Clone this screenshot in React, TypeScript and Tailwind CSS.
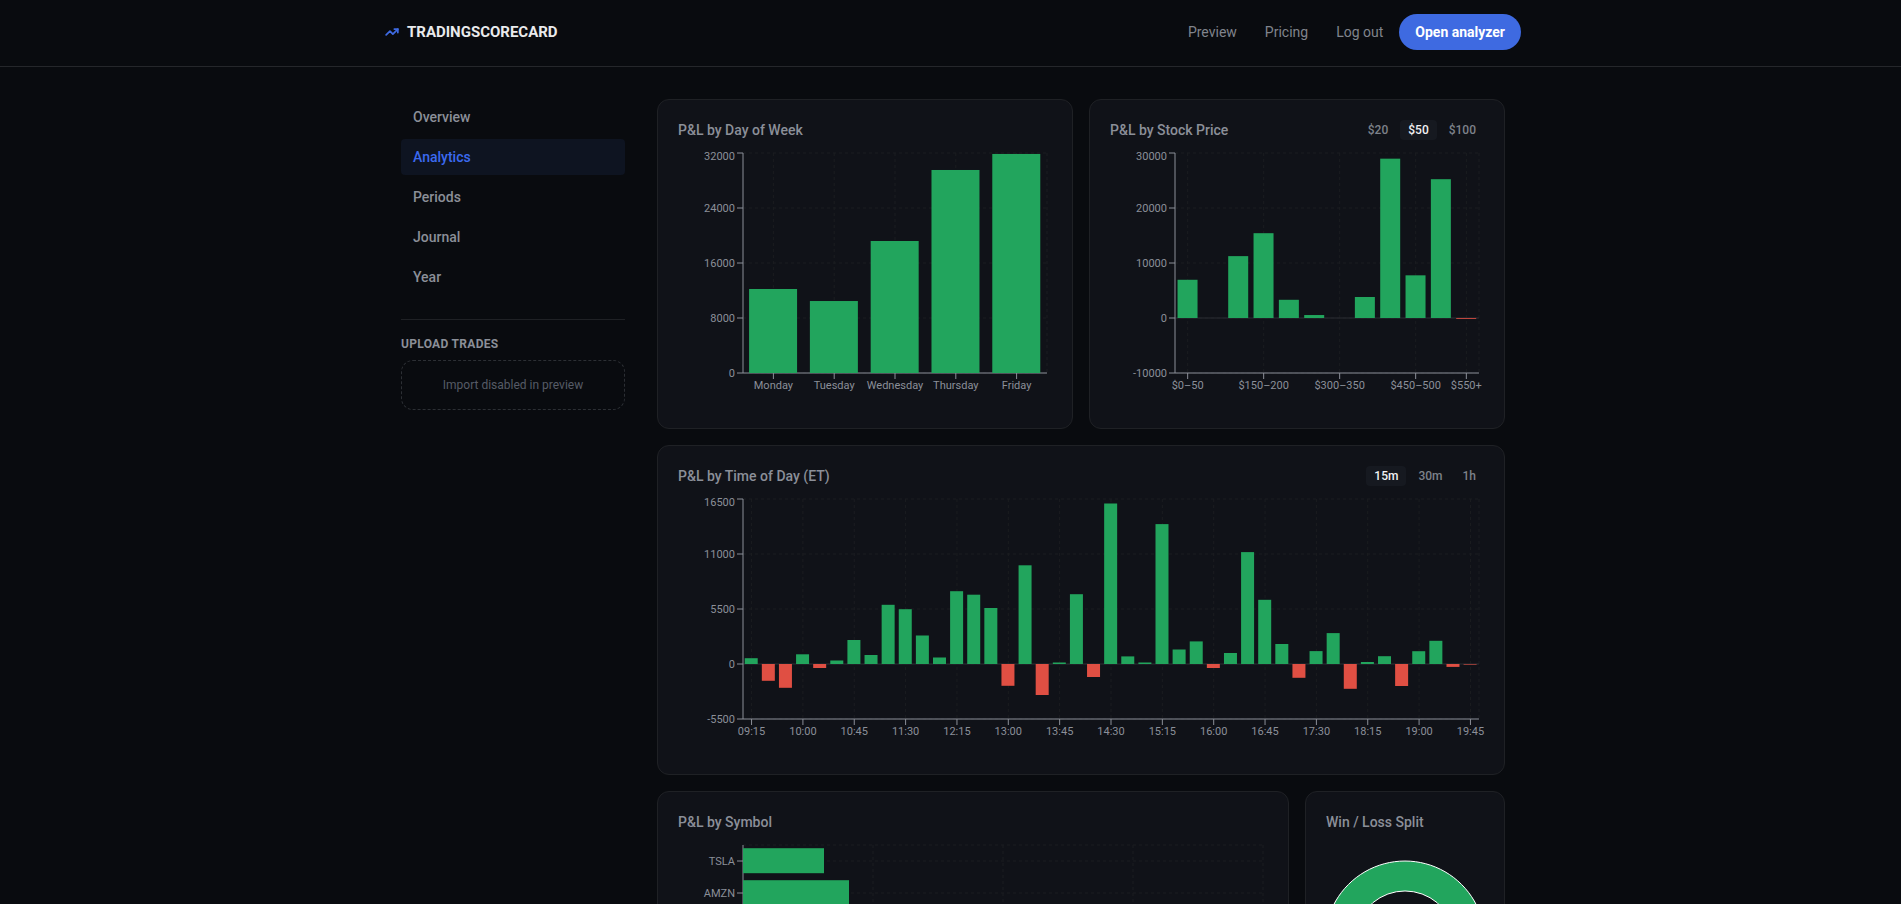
import React, { useLayoutEffect, useRef, useState } from "react";
import { TrendingUp } from "lucide-react";

interface Datum {
  label: string;
  value: number;
}

const GREEN = "#22a55d";
const RED = "#e04f43";
const AXIS = "#8b8f98";
const GRID = "#1b1d20";

const PLOT_TOP = 5;
const PLOT_LEFT = 65;
const PLOT_HEIGHT = 220;
const CHART_HEIGHT = 260;

const NAV = ["Overview", "Analytics", "Periods", "Journal", "Year"];

const DAYS: Datum[] = [
  { label: "Monday", value: 12220 },
  { label: "Tuesday", value: 10470 },
  { label: "Wednesday", value: 19200 },
  { label: "Thursday", value: 29530 },
  { label: "Friday", value: 31860 },
];

const PRICES: Record<string, Datum[]> = {
  $20: [
    { label: "$0–20", value: 2400 },
    { label: "$20–40", value: 3900 },
    { label: "$100–120", value: 11300 },
    { label: "$160–180", value: 15400 },
    { label: "$220+", value: 28900 },
  ],
  $50: [
    { label: "$0–50", value: 6950 },
    { label: "$50–100", value: 0 },
    { label: "$100–150", value: 11250 },
    { label: "$150–200", value: 15420 },
    { label: "$200–250", value: 3310 },
    { label: "$250–300", value: 540 },
    { label: "$300–350", value: 0 },
    { label: "$350–400", value: 3820 },
    { label: "$400–450", value: 28970 },
    { label: "$450–500", value: 7760 },
    { label: "$500–550", value: 25240 },
    { label: "$550+", value: -150 },
  ],
  $100: [
    { label: "$0–100", value: 6950 },
    { label: "$100–200", value: 26670 },
    { label: "$200–300", value: 3850 },
    { label: "$300–400", value: 3820 },
    { label: "$500+", value: 25090 },
  ],
};

const QUARTERS = [
  580, -1680, -2380, 970, -400, 350, 2400, 900, 5920, 5480, 2850, 650, 7280,
  6930, 5600, -2180, 9870, -3100, 150, 6980, -1300, 16050, 760, 150, 13990,
  1450, 2260, -400, 1100, 11190, 6420, 2000, -1380, 1290, 3090, -2480, 200,
  780, -2200, 1280, 2320, -290, -60,
];

const clock = (minutes: number) =>
  `${String(Math.floor(minutes / 60)).padStart(2, "0")}:${String(minutes % 60).padStart(2, "0")}`;

const bucketTimes = (size: number): Datum[] => {
  const out: Datum[] = [];
  for (let i = 0; i < QUARTERS.length; i += size) {
    const slice = QUARTERS.slice(i, i + size);
    out.push({
      label: clock(555 + i * 15),
      value: slice.reduce((a, b) => a + b, 0) / size,
    });
  }
  return out;
};

const SYMBOLS: Datum[] = [
  { label: "TSLA", value: 81 },
  { label: "AMZN", value: 106 },
  { label: "MSFT", value: 142 },
  { label: "META", value: 188 },
  { label: "AMD", value: 236 },
  { label: "AAPL", value: 301 },
  { label: "SPY", value: 388 },
  { label: "NVDA", value: 470 },
];

function useWidth(initial: number) {
  const ref = useRef<HTMLDivElement>(null);
  const [width, setWidth] = useState(initial);

  useLayoutEffect(() => {
    const el = ref.current;
    if (!el) return;
    const measure = () => setWidth(el.clientWidth);
    measure();
    const observer = new ResizeObserver(measure);
    observer.observe(el);
    return () => observer.disconnect();
  }, []);

  return { ref, width };
}

interface ColumnChartProps {
  data: Datum[];
  ticks: number[];
  every?: number;
}

// Vertical bars with a zero line; `ticks` runs from the lowest to the highest value
const ColumnChart: React.FC<ColumnChartProps> = ({ data, ticks, every = 1 }) => {
  const { ref, width } = useWidth(374);
  const right = width - 5;
  const bottom = PLOT_TOP + PLOT_HEIGHT;
  const band = (right - PLOT_LEFT) / data.length;
  const barWidth = Math.floor(band * 0.8);
  const min = ticks[0];
  const max = ticks[ticks.length - 1];
  const y = (v: number) => PLOT_TOP + ((max - v) / (max - min)) * PLOT_HEIGHT;
  const center = (i: number) => PLOT_LEFT + band * (i + 0.5);
  const labelled = data
    .map((d, i) => ({ ...d, i }))
    .filter(({ i }) => i % every === 0 || (i === data.length - 1 && i % every > 1));

  return (
    <div ref={ref} className="w-full min-w-0">
      <svg width={width} height={CHART_HEIGHT} className="block overflow-visible text-[11px]">
        <g stroke={GRID} strokeDasharray="3 3">
          {ticks.map((t) => (
            <line key={t} x1={PLOT_LEFT} x2={right} y1={y(t)} y2={y(t)} />
          ))}
          {labelled.map((d) => (
            <line key={d.i} x1={center(d.i)} x2={center(d.i)} y1={PLOT_TOP} y2={bottom} />
          ))}
          <line x1={right} x2={right} y1={PLOT_TOP} y2={bottom} />
        </g>
        {min < 0 && <line x1={PLOT_LEFT} x2={right} y1={y(0)} y2={y(0)} stroke="#2b2d32" />}
        <g stroke={AXIS}>
          <line x1={PLOT_LEFT} x2={PLOT_LEFT} y1={PLOT_TOP} y2={bottom} />
          <line x1={PLOT_LEFT} x2={right} y1={bottom} y2={bottom} />
          {ticks.map((t) => (
            <line key={t} x1={PLOT_LEFT - 6} x2={PLOT_LEFT} y1={y(t)} y2={y(t)} />
          ))}
          {labelled.map((d) => (
            <line key={d.i} x1={center(d.i)} x2={center(d.i)} y1={bottom} y2={bottom + 6} />
          ))}
        </g>
        {data.map((d, i) => (
          <rect
            key={d.label}
            x={PLOT_LEFT + band * (i + 0.1)}
            y={Math.min(y(d.value), y(0))}
            width={barWidth}
            height={Math.abs(y(d.value) - y(0))}
            fill={d.value < 0 ? RED : GREEN}
          />
        ))}
        <g fill={AXIS}>
          {ticks.map((t) => (
            <text key={t} x={PLOT_LEFT - 8} y={Math.max(y(t), 8) + 4} textAnchor="end">
              {t}
            </text>
          ))}
          {labelled.map((d) => (
            <text key={d.i} x={center(d.i)} y={bottom + 16} textAnchor="middle">
              {d.label}
            </text>
          ))}
        </g>
      </svg>
    </div>
  );
};

// Horizontal bars, one 32px row per symbol
const SymbolChart: React.FC = () => {
  const { ref, width } = useWidth(590);
  const right = width - 5;
  const row = 32;
  const bottom = PLOT_TOP + row * SYMBOLS.length;
  const scale = (right - PLOT_LEFT) / 520;
  const columns = [1, 2, 3, 4].map((n) => PLOT_LEFT + ((right - PLOT_LEFT) * n) / 4);
  const middle = (i: number) => PLOT_TOP + row * (i + 0.5);

  return (
    <div ref={ref} className="w-full min-w-0">
      <svg width={width} height={bottom + 35} className="block text-[11px]">
        <g stroke={GRID} strokeDasharray="3 3">
          <line x1={PLOT_LEFT} x2={right} y1={PLOT_TOP} y2={PLOT_TOP} />
          {SYMBOLS.map((s, i) => (
            <line key={s.label} x1={PLOT_LEFT} x2={right} y1={middle(i)} y2={middle(i)} />
          ))}
          {columns.map((x) => (
            <line key={x} x1={x} x2={x} y1={PLOT_TOP} y2={bottom} />
          ))}
        </g>
        <g stroke={AXIS}>
          <line x1={PLOT_LEFT} x2={PLOT_LEFT} y1={PLOT_TOP} y2={bottom} />
          <line x1={PLOT_LEFT} x2={right} y1={bottom} y2={bottom} />
        </g>
        {SYMBOLS.map((s, i) => (
          <g key={s.label}>
            <line x1={PLOT_LEFT - 6} x2={PLOT_LEFT} y1={middle(i)} y2={middle(i)} stroke={AXIS} />
            <rect
              x={PLOT_LEFT}
              y={PLOT_TOP + row * (i + 0.1)}
              width={s.value * scale}
              height={25}
              fill={GREEN}
            />
            <text x={PLOT_LEFT - 8} y={middle(i) + 4} textAnchor="end" fill={AXIS}>
              {s.label}
            </text>
          </g>
        ))}
      </svg>
    </div>
  );
};

const SplitDonut: React.FC = () => (
  <svg viewBox="0 0 158 202" className="block w-full overflow-visible" stroke="#fff">
    <path d="M159 101A80 80 0 1 0 39 170.3L54 144.3A50 50 0 1 1 129 101Z" fill={GREEN} />
    <path d="M39 170.3A80 80 0 0 0 159 101L129 101A50 50 0 0 1 54 144.3Z" fill={RED} />
  </svg>
);

interface CardProps {
  title: string;
  actions?: React.ReactNode;
  children: React.ReactNode;
}

const Card: React.FC<CardProps> = ({ title, actions, children }) => (
  <section className="min-w-0 rounded-xl border border-[#1f2125] bg-[#101218] p-5">
    <div className="mb-2 flex h-5 items-center justify-between">
      <h2 className="text-sm font-medium text-[#8b8f98]">{title}</h2>
      {actions}
    </div>
    {children}
  </section>
);

interface ToggleProps {
  options: string[];
  value: string;
  onChange: (value: string) => void;
}

const Toggle: React.FC<ToggleProps> = ({ options, value, onChange }) => (
  <div className="flex gap-1">
    {options.map((option) => (
      <button
        key={option}
        type="button"
        aria-pressed={option === value}
        onClick={() => onChange(option)}
        className={`rounded px-2 py-0.5 text-xs font-medium ${
          option === value ? "bg-[#161920] text-[#f1f2f4]" : "text-[#7d818a]"
        }`}
      >
        {option}
      </button>
    ))}
  </div>
);

const App: React.FC = () => {
  const [page, setPage] = useState("Analytics");
  const [step, setStep] = useState("$50");
  const [bucket, setBucket] = useState("15m");

  const size = bucket === "15m" ? 1 : bucket === "30m" ? 2 : 4;

  return (
    <div className="min-h-screen bg-[#090b0f] font-[Roboto,'Noto_Sans',sans-serif] text-[#8b8f98]">
      <header className="border-b border-[#25272b] pt-3.5 pb-4 pl-[5px]">
        <div className="mx-auto flex max-w-[1136px] items-center justify-between">
          <a href="#" className="flex items-center gap-2 text-[15px] leading-5 font-bold text-[#e9eaec]">
            <TrendingUp className="size-3.5 text-[#3e6ae1]" strokeWidth={3} />
            TRADINGSCORECARD
          </a>
          <nav className="flex items-center gap-1 text-sm text-[#80848c]">
            <a href="#preview" className="px-3">Preview</a>
            <a href="#pricing" className="px-3">Pricing</a>
            <a href="#logout" className="px-3">Log out</a>
            <a href="#analyzer" className="rounded-full bg-[#3e6ae1] px-4 py-2 font-bold text-white">
              Open analyzer
            </a>
          </nav>
        </div>
      </header>

      <div className="py-8 pl-[5px]">
        <div className="mx-auto flex max-w-[1104px] items-start gap-8">
          <aside className="w-56 shrink-0">
            <nav className="flex flex-col gap-1">
              {NAV.map((item) => (
                <button
                  key={item}
                  type="button"
                  onClick={() => setPage(item)}
                  className={`rounded-sm px-3 py-2 text-left text-sm font-medium ${
                    item === page ? "bg-[#0e1421] text-[#3b6af0]" : "text-[#8b8f98]"
                  }`}
                >
                  {item}
                </button>
              ))}
            </nav>
            <div className="mt-6 border-t border-[#1f2125] pt-4">
              <h3 className="mb-2 text-xs font-bold tracking-wide">UPLOAD TRADES</h3>
              <div className="rounded-xl border border-dashed border-[#2c2f34] py-4 text-center text-xs text-[#565b66]">
                Import disabled in preview
              </div>
            </div>
          </aside>

          <main className="grid min-w-0 flex-1 gap-4">
            <div className="grid grid-cols-2 gap-4">
              <Card title="P&L by Day of Week">
                <ColumnChart data={DAYS} ticks={[0, 8000, 16000, 24000, 32000]} />
              </Card>
              <Card
                title="P&L by Stock Price"
                actions={<Toggle options={["$20", "$50", "$100"]} value={step} onChange={setStep} />}
              >
                <ColumnChart
                  data={PRICES[step]}
                  ticks={[-10000, 0, 10000, 20000, 30000]}
                  every={step === "$50" ? 3 : 1}
                />
              </Card>
            </div>
            <Card
              title="P&L by Time of Day (ET)"
              actions={<Toggle options={["15m", "30m", "1h"]} value={bucket} onChange={setBucket} />}
            >
              <ColumnChart
                data={bucketTimes(size)}
                ticks={[-5500, 0, 5500, 11000, 16500]}
                every={size === 1 ? 3 : 1}
              />
            </Card>
            <div className="grid grid-cols-[minmax(0,1fr)_200px] gap-4">
              <Card title="P&L by Symbol">
                <SymbolChart />
              </Card>
              <Card title="Win / Loss Split">
                <SplitDonut />
              </Card>
            </div>
          </main>
        </div>
      </div>
    </div>
  );
};

export default App;
